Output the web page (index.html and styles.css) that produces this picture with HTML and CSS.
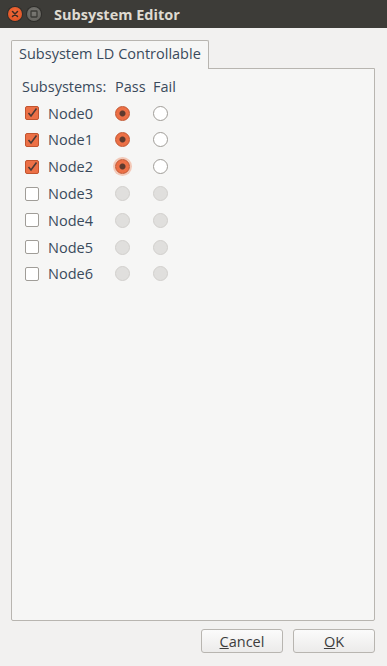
FILE: index.html
```html
<!DOCTYPE html>
<html lang="en">
<head>
  <meta charset="UTF-8" />
  <title>Subsystem Editor</title>
  <link rel="stylesheet" href="styles.css">
</head>
<body>
  <div class="window">
    <div class="titlebar">
      <span class="wbtn close">
        <svg width="8" height="8" viewBox="0 0 8 8"><path d="M1.5 1.5 L6.5 6.5 M6.5 1.5 L1.5 6.5" stroke="#3c2a22" stroke-width="1.5" stroke-linecap="round"/></svg>
      </span>
      <span class="wbtn minimize">
        <svg width="8" height="8" viewBox="0 0 8 8"><rect x="1" y="1" width="6" height="6" rx="0.5" fill="none" stroke="#3a3a36" stroke-width="1.3"/></svg>
      </span>
      <span class="title">Subsystem Editor</span>
    </div>

    <div class="content">
      <div class="tabs">
        <div class="tab">Subsystem LD Controllable</div>
      </div>
      <div class="pane">
        <div class="grid">
          <div class="head">Subsystems:</div>
          <div class="head">Pass</div>
          <div class="head">Fail</div>

          <label class="node"><span class="check on"></span>Node0</label>
          <span class="radio on"></span><span class="radio"></span>

          <label class="node"><span class="check on"></span>Node1</label>
          <span class="radio on"></span><span class="radio"></span>

          <label class="node"><span class="check on"></span>Node2</label>
          <span class="radio on focus"></span><span class="radio"></span>

          <label class="node"><span class="check"></span>Node3</label>
          <span class="radio off"></span><span class="radio off"></span>

          <label class="node"><span class="check"></span>Node4</label>
          <span class="radio off"></span><span class="radio off"></span>

          <label class="node"><span class="check"></span>Node5</label>
          <span class="radio off"></span><span class="radio off"></span>

          <label class="node"><span class="check"></span>Node6</label>
          <span class="radio off"></span><span class="radio off"></span>
        </div>
      </div>

      <div class="buttons">
        <button><u>C</u>ancel</button>
        <button><u>O</u>K</button>
      </div>
    </div>
  </div>
</body>
</html>
```

FILE: styles.css
```css
body {
  margin: 0;
  font-family: "Open Sans", "DejaVu Sans", sans-serif;
  font-size: 14.5px;
  color: #3c3c3c;
  background-color: #f2f1f0;
}

.window {
  height: 666px;
  display: flex;
  flex-direction: column;
}

.titlebar {
  height: 28px;
  background-color: #3d3c38;
  display: flex;
  align-items: center;
  padding-left: 8px;
}

.wbtn {
  width: 14px;
  height: 14px;
  border-radius: 50%;
  display: flex;
  align-items: center;
  justify-content: center;
  margin-right: 5px;
}

.close {
  background: radial-gradient(circle at 50% 40%, #f26b3a, #dc4e1f);
  box-shadow: 0 0 0 1px #2e2d2a;
}

.minimize {
  background: radial-gradient(circle at 50% 40%, #7a7974, #5e5d58);
  box-shadow: 0 0 0 1px #2e2d2a;
}

.title {
  margin-left: 8px;
  font-weight: bold;
  color: #dfdbd2;
  font-size: 14.5px;
}

.content {
  flex: 1;
  display: flex;
  flex-direction: column;
  padding: 11px 12px 13px 11px;
}

.tabs {
  display: flex;
}

.tab {
  background-color: #f6f6f5;
  border: 1px solid #b8b5b0;
  border-bottom: none;
  border-radius: 2px 2px 0 0;
  padding: 3px 7px 6px 7px;
  height: 19px;
  color: #3a4a5c;
  position: relative;
  top: 1px;
}

.pane {
  flex: 1;
  background-color: #f6f6f5;
  border: 1px solid #b8b5b0;
  border-radius: 0 0 2px 2px;
  padding: 4px 10px;
}

.grid {
  display: grid;
  grid-template-columns: 93px 38px 20px;
  grid-auto-rows: 26.8px;
  align-items: center;
}

.grid .head {
  color: #3a4a5c;
}

.node {
  display: flex;
  align-items: center;
  padding-left: 3px;
  color: #3a4a5c;
}

.check {
  width: 12px;
  height: 12px;
  border: 1px solid #a09d98;
  border-radius: 2px;
  background-color: #fff;
  margin-right: 9px;
}

.check.on {
  background-color: #ec7046;
  border-color: #c2552f;
  background-image: url("data:image/svg+xml,%3Csvg xmlns='http://www.w3.org/2000/svg' viewBox='0 0 12 12'%3E%3Cpath d='M2.5 6 L5 9 L10.5 1.5' fill='none' stroke='%234a3a36' stroke-width='1.6'/%3E%3C/svg%3E");
}

.radio {
  width: 15px;
  height: 15px;
  border: 1px solid #a09d98;
  border-radius: 50%;
  background-color: #fff;
  box-sizing: border-box;
}

.radio.on {
  background: radial-gradient(circle, #5e3a2e 0 2.5px, #ec7046 3.5px);
  border-color: #c2552f;
}

.radio.focus {
  box-shadow: 0 0 0 2px #f3c9b8;
}

.radio.off {
  background-color: #e0dfdd;
  border-color: #d2d0cd;
}

.buttons {
  display: flex;
  justify-content: flex-end;
  gap: 10px;
  margin-top: 8px;
}

button {
  width: 82px;
  height: 24px;
  font-family: inherit;
  font-size: 14.5px;
  color: #3c3c3c;
  border: 1px solid #b8b5b0;
  border-radius: 3px;
  background: linear-gradient(#fbfbfb, #ecebea);
}
```
